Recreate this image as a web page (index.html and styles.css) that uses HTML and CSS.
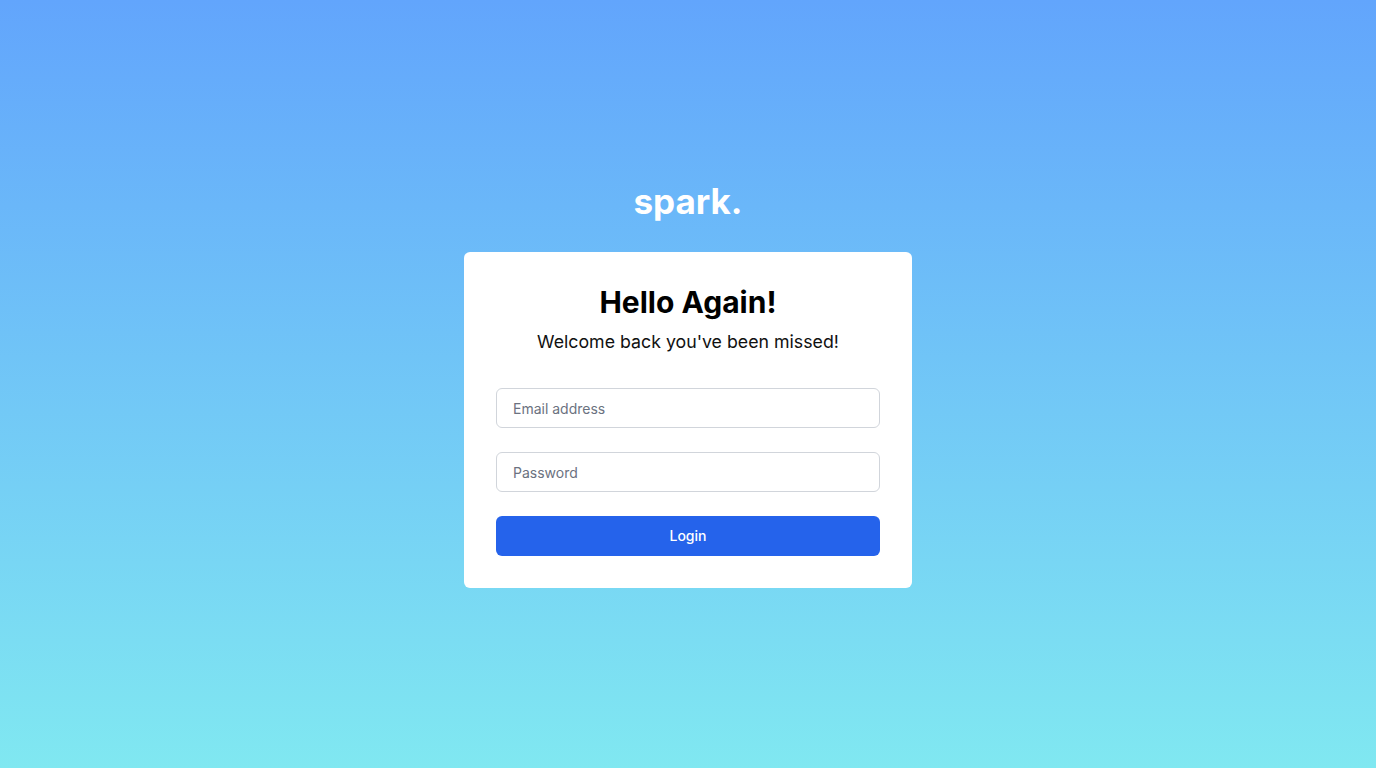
FILE: index.html
```html
<!DOCTYPE html>
<html lang="en">
<head>
<meta charset="utf-8">
<title>spark. — Login</title>
<link rel="stylesheet" href="styles.css">
</head>
<body>
<main class="page">
  <div class="logo">spark.</div>
  <form class="card">
    <h1 class="title">Hello Again!</h1>
    <p class="subtitle">Welcome back you've been missed!</p>
    <div class="fields">
      <input class="input" type="email" placeholder="Email address">
      <input class="input" type="password" placeholder="Password">
      <button class="btn" type="button">Login</button>
    </div>
  </form>
</main>
</body>
</html>
```
FILE: styles.css
```css
* { box-sizing: border-box; }
html, body { margin: 0; padding: 0; height: 100%; }
body {
  font-family: Inter, "Noto Sans", sans-serif;
  background: linear-gradient(to bottom, #62a5fc, #80e8f1);
  min-height: 100vh;
}
.page {
  min-height: 100vh;
  display: flex;
  flex-direction: column;
  align-items: center;
  justify-content: center;
}
.logo {
  color: #fff;
  font-size: 35px;
  line-height: 40px;
  font-weight: 700;
  margin-bottom: 31px;
}
.card {
  width: 448px;
  background: #fff;
  border-radius: 6px;
  padding: 32px;
  text-align: center;
}
.title {
  margin: 0;
  font-size: 30px;
  line-height: 36px;
  font-weight: 700;
  color: #000;
}
.subtitle {
  margin: 8px 0 0;
  font-size: 17.75px;
  line-height: 28px;
  color: #111;
}
.fields {
  margin-top: 32px;
  display: flex;
  flex-direction: column;
  gap: 24px;
}
.input {
  height: 40px;
  width: 100%;
  border: 1px solid #d1d5db;
  border-radius: 6px;
  padding: 1px 16px 0;
  font-family: Inter, sans-serif;
  font-size: 14px;
  color: #111;
  background: #fff;
  outline: none;
}
.input::placeholder { color: #6b7280; }
.btn {
  height: 40px;
  width: 100%;
  border: none;
  border-radius: 6px;
  background: #2563eb;
  color: #fff;
  font-family: Inter, sans-serif;
  font-size: 14px;
  font-weight: 500;
  cursor: pointer;
}
```
